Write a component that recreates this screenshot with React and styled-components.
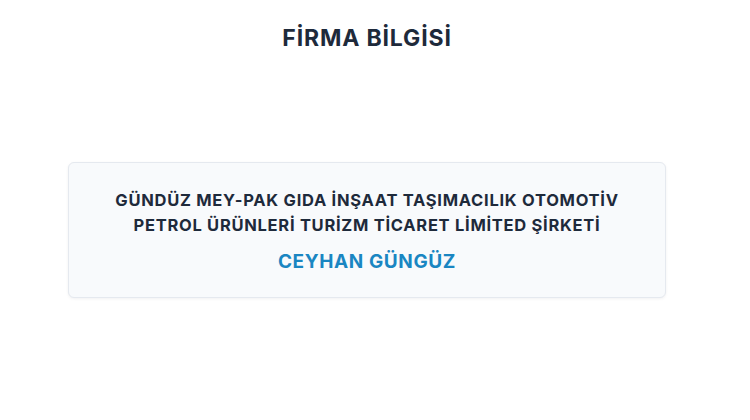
import React from "react";
import styled, { createGlobalStyle } from "styled-components";

const GlobalStyle = createGlobalStyle`
  html, body {
    margin: 0;
    padding: 0;
    background: #ffffff;
    font-family: "Inter", "Open Sans", sans-serif;
  }
`;

const Page = styled.div`
  display: flex;
  flex-direction: column;
  align-items: center;
  padding: 24px 84px 0 68px;
  height: 420px;
  box-sizing: border-box;
`;

const Title = styled.h1`
  margin: 0;
  font-size: 23px;
  font-weight: 700;
  color: #1e2a3b;
  letter-spacing: 0.85px;
  line-height: 28px;
`;

const Card = styled.div`
  margin-top: 110px;
  width: 100%;
  box-sizing: border-box;
  background: #f8fafc;
  border: 1px solid #e5e9ef;
  border-radius: 6px;
  box-shadow: 0 1px 3px rgba(15, 23, 42, 0.06);
  padding: 25px 20px 23px;
  text-align: center;
`;

const Company = styled.div`
  font-size: 16.5px;
  font-weight: 700;
  color: #1e2a3b;
  letter-spacing: 0.72px;
  line-height: 25px;
`;

const Person = styled.div`
  margin-top: 12px;
  font-size: 19px;
  font-weight: 700;
  color: #1a86c2;
  letter-spacing: 0.6px;
  line-height: 24px;
`;

export default function App() {
  return (
    <>
      <GlobalStyle />
      <Page>
        <Title>FİRMA BİLGİSİ</Title>
        <Card>
          <Company>
            GÜNDÜZ MEY-PAK GIDA İNŞAAT TAŞIMACILIK OTOMOTİV
            <br />
            PETROL ÜRÜNLERİ TURİZM TİCARET LİMİTED ŞİRKETİ
          </Company>
          <Person>CEYHAN GÜNGÜZ</Person>
        </Card>
      </Page>
    </>
  );
}
